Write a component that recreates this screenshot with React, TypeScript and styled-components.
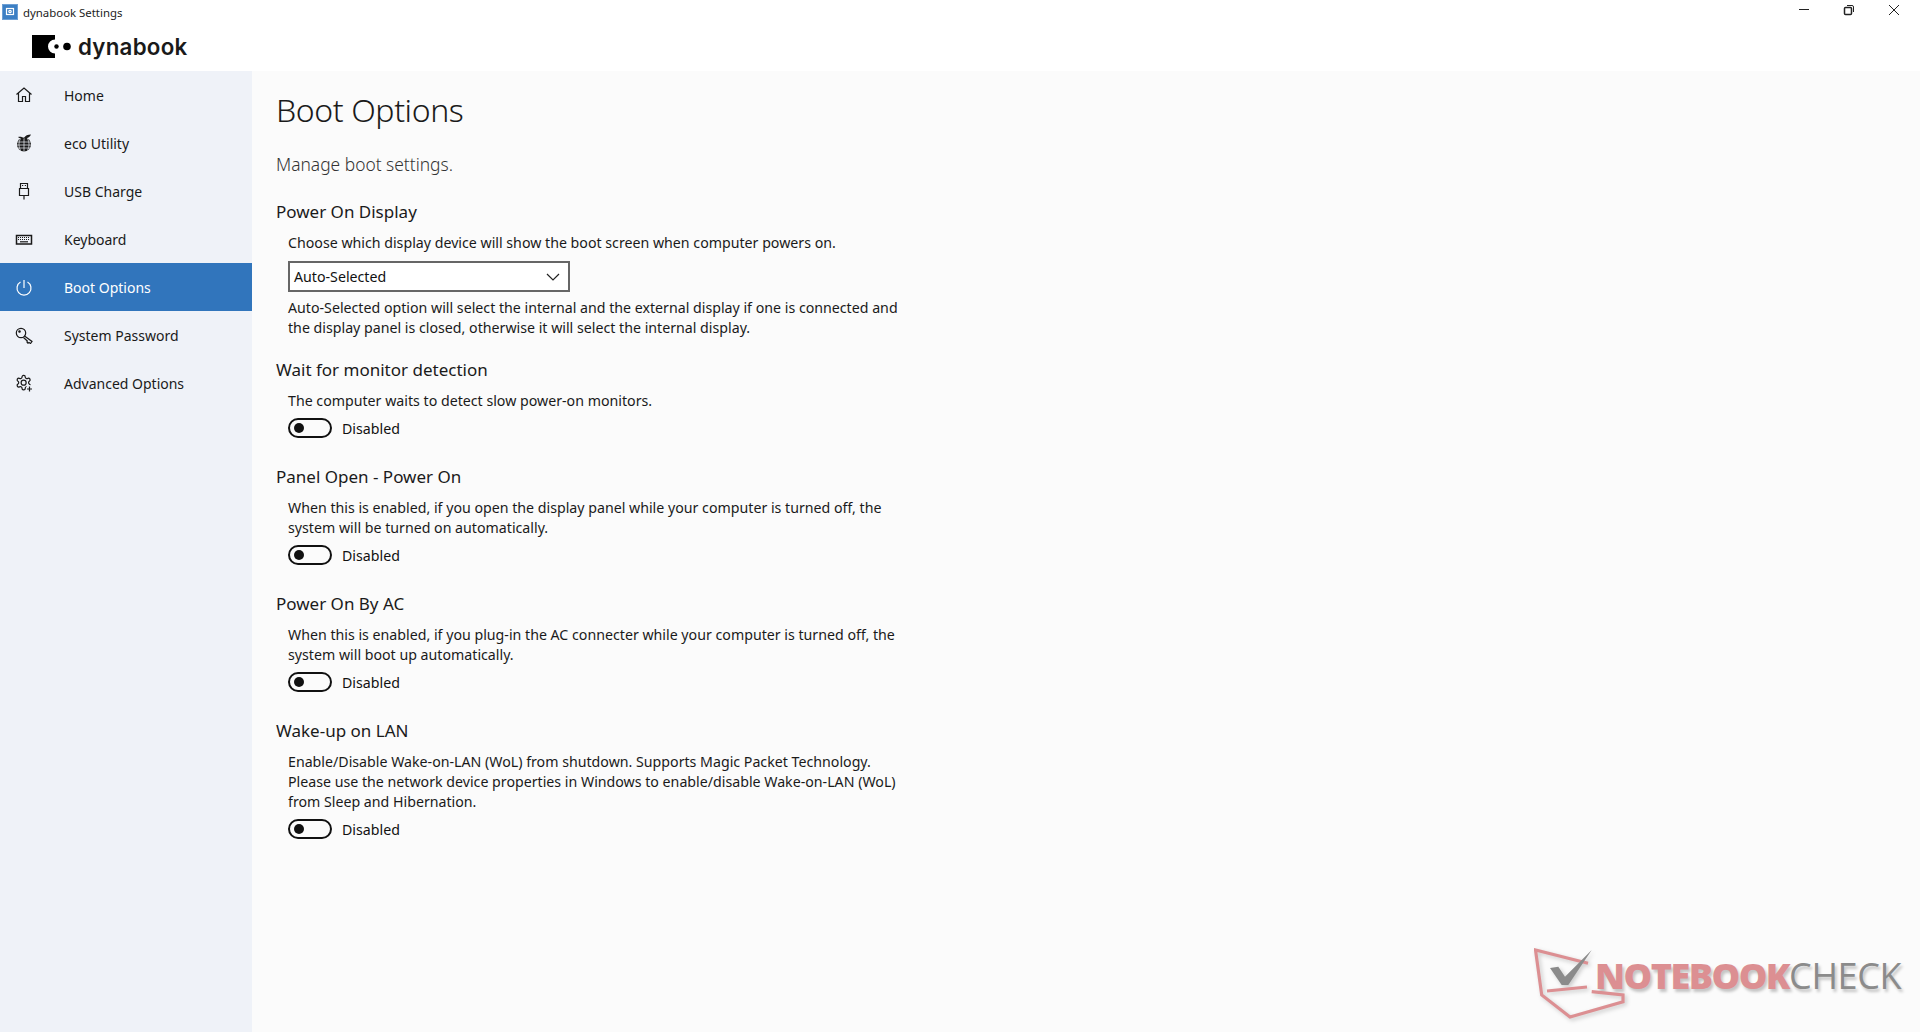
import React from 'react';
import styled, {createGlobalStyle} from 'styled-components';

const GlobalStyle = createGlobalStyle`
  html, body {
    margin: 0;
    padding: 0;
    height: 100%;
    background: #fff;
    overflow: hidden;
  }
  body {
    font-family: "Noto Sans", "Open Sans", sans-serif;
    color: #111;
  }
`;

const Window = styled.div`
  width: 1920px;
  height: 1032px;
  display: flex;
  flex-direction: column;
  position: relative;
  overflow: hidden;
`;

const TitleBar = styled.div`
  height: 24px;
  display: flex;
  align-items: center;
  padding-left: 2px;
  font-size: 11.4px;
`;

const AppIcon = styled.div`
  width: 16px;
  height: 16px;
  background: #3c7fc4;
  border: 1px solid #6d9fd4;
  box-sizing: border-box;
  margin-right: 5px;
  display: flex;
  align-items: center;
  justify-content: center;
`;

const TitleText = styled.span`
  flex: 1;
  color: #222;
`;

const WindowButtons = styled.div`
  display: flex;
  align-items: center;
  align-self: flex-start;
  gap: 33px;
  padding-right: 20px;
  height: 20px;
`;

const Brand = styled.div`
  height: 47px;
  box-sizing: border-box;
  padding: 0 0 2px 32px;
  display: flex;
  align-items: center;
  gap: 6px;
`;

const BrandName = styled.span`
  font-family: Inter, "Noto Sans", sans-serif;
  font-size: 22.3px;
  font-weight: 600;
  color: #1a1a1a;
  letter-spacing: 0.25px;
`;

const Body = styled.div`
  flex: 1;
  display: flex;
  min-height: 0;
`;

const Sidebar = styled.nav`
  width: 252px;
  background: #eff2f8;
`;

const NavRow = styled.div<{$active?: boolean}>`
  height: 48px;
  display: flex;
  align-items: center;
  padding-left: 15px;
  font-size: 14px;
  background: ${p => (p.$active ? '#3175bc' : 'transparent')};
  color: ${p => (p.$active ? '#fff' : '#1a1a1a')};
`;

const NavIcon = styled.span`
  width: 18px;
  height: 18px;
  margin-right: 31px;
  display: flex;
  color: inherit;
`;

const Main = styled.main`
  flex: 1;
  background: #fbfbfb;
  padding: 16px 0 0 24px;
`;

const PageTitle = styled.h1`
  margin: 0;
  font-size: 32px;
  line-height: 46px;
  font-weight: 300;
  letter-spacing: -0.4px;
  color: #1a1a1a;
`;

const PageSub = styled.p`
  margin: 18px 0 0;
  font-size: 17.4px;
  line-height: 26px;
  font-weight: 300;
  color: #333;
`;

const Section = styled.section`
  margin-top: 21px;
  width: 640px;
  &:first-of-type {
    margin-top: 23px;
  }
  &:nth-of-type(2) {
    margin-top: 20px;
  }
`;

const Heading = styled.h2`
  margin: 0;
  font-size: 17px;
  line-height: 24px;
  font-weight: 400;
  color: #1a1a1a;
`;

const Indented = styled.div`
  padding-left: 12px;
  margin-top: 9px;
`;

const Description = styled.p`
  margin: 0;
  font-size: 14.2px;
  line-height: 20px;
  color: #1a1a1a;
  max-width: 625px;
`;

const Select = styled.div`
  width: 282px;
  height: 31px;
  box-sizing: border-box;
  border: 2px solid #666;
  margin: 8px 0 6px;
  display: flex;
  align-items: center;
  justify-content: space-between;
  padding: 0 8px 0 4px;
  font-size: 14.2px;
  background: #fff;
`;

const ToggleRow = styled.div`
  display: flex;
  align-items: center;
  margin: 7px 0 27px;
  height: 20px;
  font-size: 14.2px;
`;

const ToggleTrack = styled.span`
  width: 44px;
  height: 20px;
  box-sizing: border-box;
  border: 2px solid #111;
  border-radius: 10px;
  display: flex;
  align-items: center;
  padding-left: 4px;
  margin-right: 10px;
`;

const ToggleKnob = styled.span`
  width: 10px;
  height: 10px;
  border-radius: 50%;
  background: #111;
`;

const Watermark = styled.div`
  position: absolute;
  left: 1534px;
  top: 948px;
  display: flex;
`;

const MarkLaptop = styled.svg`
  width: 92px;
  height: 72px;
  margin-right: -31px;
  flex: none;
  filter: drop-shadow(2px 2px 2px rgba(0, 0, 0, 0.2));
`;

const MarkText = styled.span<{$red?: boolean}>`
  margin-top: 7px;
  font-family: "Open Sans", sans-serif;
  font-size: 36px;
  line-height: 42px;
  letter-spacing: ${p => (p.$red ? '-1.5px' : '-0.4px')};
  font-weight: ${p => (p.$red ? 800 : 500)};
  color: ${p => (p.$red ? '#dc8f92' : '#8b8b8b')};
  text-shadow: 2px 3px 3px rgba(0, 0, 0, 0.22);
`;

const icon = {
  fill: 'none',
  stroke: 'currentColor',
  strokeWidth: 1.2,
  viewBox: '0 0 18 18',
  width: 18,
  height: 18,
};

const HomeIcon = () => (
  <svg {...icon}>
    <path d="M1.5 8.5 9 2l7.5 6.5M3.5 7v8.500h4v-5h3v5h4V7" />
  </svg>
);

const EcoIcon = () => (
  <svg {...icon}>
    <circle cx="9" cy="10.500" r="7" fill="currentColor" stroke="none" />
    <path d="M2 8h14M2 11h14M3 14h12M9 3.500v14M5.500 4.500c-2 4-2 8 0 12M12.500 4.500c2 4 2 8 0 12" stroke="#eff2f8" strokeWidth="0.7" />
    <path d="M9 4c1-2.500 4-3.500 7-3.500C15 3 12 4.800 9 4zM9 4.500C7.500 3 5.500 2.500 3 3c1.500 1.500 4 2 6 1.500z" fill="currentColor" stroke="none" />
  </svg>
);

const UsbIcon = () => (
  <svg {...icon}>
    <path d="M5.500 1.500h7v5h-7zM4.500 6.500h9v7h-9zM9 13.500v4" />
    <path d="M7 3.500h1.200M9.800 3.500H11" />
  </svg>
);

const KeyboardIcon = () => (
  <svg {...icon}>
    <rect x="1.500" y="5.500" width="15" height="8.500" strokeWidth="1.500" />
    <path d="M3 7.500h12M3 9.500h12" strokeDasharray="1 1" />
    <path d="M5 11.800h8" />
  </svg>
);

const PowerIcon = () => (
  <svg {...icon}>
    <path d="M9 2v8M5.500 4a7 7 0 1 0 7 0" />
  </svg>
);

const KeyIcon = () => (
  <svg {...icon}>
    <circle cx="6" cy="7" r="4.700" />
    <path d="M9.500 10l7.500 5.500-1.500 2-1.500-1-1 .7-1-1.200.3-1-3.800-3.500" />
    <circle cx="4.500" cy="5.500" r="0.700" fill="currentColor" />
  </svg>
);

const GearIcon = () => (
  <svg {...icon}>
    <g transform="scale(.72)" strokeWidth="1.700">
      <path d="M12.220 2h-.44a2 2 0 0 0-2 2v.18a2 2 0 0 1-1 1.730l-.43.250a2 2 0 0 1-2 0l-.15-.08a2 2 0 0 0-2.730.73l-.22.38a2 2 0 0 0 .73 2.730l.15.100a2 2 0 0 1 1 1.720v.510a2 2 0 0 1-1 1.740l-.15.090a2 2 0 0 0-.73 2.730l.22.380a2 2 0 0 0 2.730.73l.15-.08a2 2 0 0 1 2 0l.43.250a2 2 0 0 1 1 1.730V20a2 2 0 0 0 2 2h.44a2 2 0 0 0 2-2v-.18a2 2 0 0 1 1-1.730l.43-.250a2 2 0 0 1 2 0l.15.080a2 2 0 0 0 2.730-.73l.22-.39a2 2 0 0 0-.73-2.730l-.15-.08a2 2 0 0 1-1-1.740v-.5a2 2 0 0 1 1-1.740l.15-.09a2 2 0 0 0 .73-2.730l-.22-.38a2 2 0 0 0-2.730-.73l-.15.080a2 2 0 0 1-2 0l-.43-.25a2 2 0 0 1-1-1.730V4a2 2 0 0 0-2-2z" />
      <circle cx="12" cy="12" r="3.500" />
    </g>
    <circle cx="14.500" cy="14.500" r="3.500" fill="#eff2f8" stroke="none" />
    <path d="M12 15h5M14.500 12.500v5" />
  </svg>
);

const NAV = [
  {name: 'Home', Icon: HomeIcon},
  {name: 'eco Utility', Icon: EcoIcon},
  {name: 'USB Charge', Icon: UsbIcon},
  {name: 'Keyboard', Icon: KeyboardIcon},
  {name: 'Boot Options', Icon: PowerIcon, active: true},
  {name: 'System Password', Icon: KeyIcon},
  {name: 'Advanced Options', Icon: GearIcon},
];

const Toggle = () => (
  <ToggleRow>
    <ToggleTrack>
      <ToggleKnob />
    </ToggleTrack>
    Disabled
  </ToggleRow>
);

const App = () => (
  <Window>
    <GlobalStyle />
    <TitleBar>
      <AppIcon>
        <svg width="10" height="10" viewBox="0 0 10 10" fill="none" stroke="#fff" strokeWidth="1.200">
          <rect x="1.500" y="1.500" width="7" height="6" />
          <circle cx="5" cy="4.500" r="1.200" />
        </svg>
      </AppIcon>
      <TitleText>dynabook Settings</TitleText>
      <WindowButtons>
        <svg width="12" height="12" viewBox="0 0 12 12" stroke="#222" fill="none"><path d="M1 5.500h10" /></svg>
        <svg width="12" height="12" viewBox="0 0 12 12" stroke="#222" fill="none"><rect x="1.500" y="3.500" width="7" height="7" rx="1" strokeWidth="1.500" /><path d="M4 1.500h5a1.500 1.500 0 0 1 1.500 1.500v5" /></svg>
        <svg width="12" height="12" viewBox="0 0 12 12" stroke="#222" fill="none"><path d="M1 1l10 10M11 1L1 11" /></svg>
      </WindowButtons>
    </TitleBar>
    <Brand>
      <svg width="40" height="23" viewBox="0 0 40 23">
        <path d="M0 0h23v4.500a7 7 0 0 0 0 14V23H0z" fill="#000" />
        <circle cx="24.500" cy="11.500" r="2.200" fill="#000" />
        <circle cx="35" cy="11.500" r="3.800" fill="#000" />
      </svg>
      <BrandName>dynabook</BrandName>
    </Brand>
    <Body>
      <Sidebar>
        {NAV.map(({name, Icon, active}) => (
          <NavRow key={name} $active={active}>
            <NavIcon>
              <Icon />
            </NavIcon>
            {name}
          </NavRow>
        ))}
      </Sidebar>
      <Main>
        <PageTitle>Boot Options</PageTitle>
        <PageSub>Manage boot settings.</PageSub>
        <Section>
          <Heading>Power On Display</Heading>
          <Indented>
            <Description>Choose which display device will show the boot screen when computer powers on.</Description>
            <Select>
              Auto-Selected
              <svg width="14" height="8" viewBox="0 0 14 8" fill="none" stroke="#222" strokeWidth="1.200"><path d="M1 1l6 6 6-6" /></svg>
            </Select>
            <Description>
              Auto-Selected option will select the internal and the external display if one is connected and the display panel is closed, otherwise it will select the internal display.
            </Description>
          </Indented>
        </Section>
        <Section>
          <Heading>Wait for monitor detection</Heading>
          <Indented>
            <Description>The computer waits to detect slow power-on monitors.</Description>
            <Toggle />
          </Indented>
        </Section>
        <Section>
          <Heading>Panel Open - Power On</Heading>
          <Indented>
            <Description>When this is enabled, if you open the display panel while your computer is turned off, the system will be turned on automatically.</Description>
            <Toggle />
          </Indented>
        </Section>
        <Section>
          <Heading>Power On By AC</Heading>
          <Indented>
            <Description>When this is enabled, if you plug-in the AC connecter while your computer is turned off, the system will boot up automatically.</Description>
            <Toggle />
          </Indented>
        </Section>
        <Section>
          <Heading>Wake-up on LAN</Heading>
          <Indented>
            <Description>
              Enable/Disable Wake-on-LAN (WoL) from shutdown. Supports Magic Packet Technology.
              <br />
              Please use the network device properties in Windows to enable/disable Wake-on-LAN (WoL) from Sleep and Hibernation.
            </Description>
            <Toggle />
          </Indented>
        </Section>
      </Main>
    </Body>
    <Watermark>
      <MarkLaptop viewBox="0 0 92 72" fill="none">
        <path d="M54 15.300 1.500 2 7.700 47 36 69 89 53.700V47L57.700 43.700M13 43l40-4" stroke="#dc8f92" strokeWidth="3.200" />
        <path d="M16 20l8.300-1.300L31 28.700 57.700 2 34.300 37h-6.600z" fill="#8b8b8b" />
      </MarkLaptop>
      <MarkText $red>NOTEBOOK</MarkText>
      <MarkText>CHECK</MarkText>
    </Watermark>
  </Window>
);

export default App;
